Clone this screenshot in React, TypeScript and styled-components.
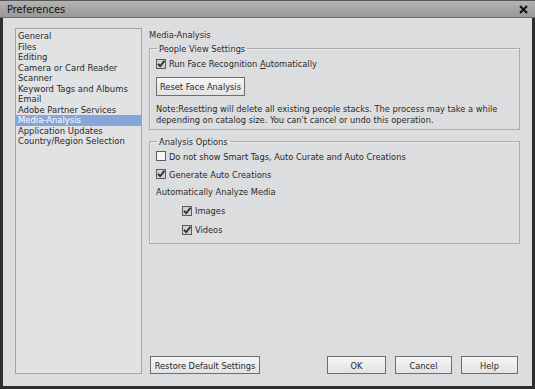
import React from 'react'
import styled, { createGlobalStyle } from 'styled-components'

const GlobalStyle = createGlobalStyle`
    html, body {
        margin: 0;
        padding: 0;
        background: #2b2b2b;
    }
`

const FONT = `'DejaVu Sans Condensed', 'DejaVu Sans', sans-serif`

const categories = [
    'General',
    'Files',
    'Editing',
    'Camera or Card Reader',
    'Scanner',
    'Keyword Tags and Albums',
    'Email',
    'Adobe Partner Services',
    'Media-Analysis',
    'Application Updates',
    'Country/Region Selection',
]

export default function App() {
    return (
        <>
            <GlobalStyle />
            <Window>
                <TitleBar>
                    <Title>Preferences</Title>
                    <Close>
                        <svg width="9" height="9" viewBox="0 0 9 9">
                            <path d="M1 1 L8 8 M8 1 L1 8" stroke="#111" strokeWidth="2" />
                        </svg>
                    </Close>
                </TitleBar>
                <Body>
                    <CategoryList>
                        {categories.map((name) => (
                            <CategoryItem key={name} $selected={name === 'Media-Analysis'}>
                                {name}
                            </CategoryItem>
                        ))}
                    </CategoryList>
                    <Panel>
                        <PanelTitle>Media-Analysis</PanelTitle>
                        <Group $top={3}>
                            <Legend>People View Settings</Legend>
                            <CheckRow $height={19}>
                                <CheckBox checked />
                                <span>
                                    Run Face Recognition <u>A</u>utomatically
                                </span>
                            </CheckRow>
                            <Button $width={89}>Reset Face Analysis</Button>
                            <Note>
                                Note:Resetting will delete all existing people stacks. The process may take a while
                                <br />
                                depending on catalog size. You can't cancel or undo this operation.
                            </Note>
                        </Group>
                        <Group $top={6}>
                            <Legend>Analysis Options</Legend>
                            <CheckRow>
                                <CheckBox />
                                <span>Do not show Smart Tags, Auto Curate and Auto Creations</span>
                            </CheckRow>
                            <CheckRow>
                                <CheckBox checked />
                                <span>Generate Auto Creations</span>
                            </CheckRow>
                            <Caption>Automatically Analyze Media</Caption>
                            <CheckRow $indent={26} $height={19}>
                                <CheckBox checked />
                                <span>Images</span>
                            </CheckRow>
                            <CheckRow $indent={26} $height={19}>
                                <CheckBox checked />
                                <span>Videos</span>
                            </CheckRow>
                        </Group>
                        <Footer>
                            <Button $width={110}>Restore Default Settings</Button>
                            <Spacer />
                            <Button $width={59}>OK</Button>
                            <Button $width={57}>Cancel</Button>
                            <Button $width={57}>Help</Button>
                        </Footer>
                    </Panel>
                </Body>
            </Window>
        </>
    )
}

function CheckBox({ checked }: { checked?: boolean }) {
    return (
        <Box $checked={checked}>
            {checked ? (
                <svg width="10" height="10" viewBox="0 0 10 10">
                    <path
                        d="M2 4.8 L4.2 7.2 L8.4 1.8"
                        fill="none"
                        stroke="#2a2a2a"
                        strokeWidth="1.8"
                    />
                </svg>
            ) : null}
        </Box>
    )
}

const Window = styled.div`
    width: 535px;
    height: 389px;
    box-sizing: border-box;
    display: flex;
    flex-direction: column;
    background: #dcdddf;
    border: 3px solid #2e2e2e;
    border-top: 0;
    font-family: ${FONT};
    font-size: 9.2px;
    color: #2a2a2a;
`

const TitleBar = styled.div`
    height: 18px;
    flex-shrink: 0;
    margin: 0 -3px;
    padding: 0 5px 0 7px;
    display: flex;
    align-items: center;
    background: linear-gradient(#b4b4b4, #a2a2a2 60%, #9a9a9a);
    border-top: 1px solid #555;
    border-bottom: 1px solid #6a6a6a;
    box-sizing: border-box;
`

const Title = styled.div`
    flex: 1;
    font-size: 11px;
    color: #111;
`

const Close = styled.div`
    display: flex;
    align-items: center;
    padding-right: 2px;
`

const Body = styled.div`
    flex: 1;
    display: flex;
    gap: 7px;
    padding: 10px 12px 12px 12px;
    min-height: 0;
`

const CategoryList = styled.div`
    width: 127px;
    box-sizing: border-box;
    border: 1px solid #a4a4a4;
    background: #e1e2e4;
    padding-top: 2px;
`

const CategoryItem = styled.div<{ $selected?: boolean }>`
    height: 10.5px;
    line-height: 10.5px;
    padding-left: 2px;
    white-space: nowrap;
    font-size: 9.4px;
    background: ${({ $selected }) => ($selected ? '#86a6da' : 'transparent')};
    color: ${({ $selected }) => ($selected ? '#fff' : '#2a2a2a')};
`

const Panel = styled.div`
    flex: 1;
    display: flex;
    flex-direction: column;
`

const PanelTitle = styled.div`
    line-height: 11px;
    margin-top: 1px;
`

const Group = styled.fieldset<{ $top: number }>`
    margin: ${({ $top }) => $top}px 0 0;
    padding: 0 6px 4px;
    border: 1px solid #acacac;
    box-shadow: inset 1px 1px 0 #ececec;
    display: flex;
    flex-direction: column;
    align-items: flex-start;
`

const Legend = styled.legend`
    margin-left: 1px;
    padding: 0 2px;
    line-height: 11px;
`

const CheckRow = styled.div<{ $indent?: number; $height?: number }>`
    height: ${({ $height }) => $height || 18}px;
    display: flex;
    align-items: center;
    gap: 3px;
    padding-left: ${({ $indent }) => $indent || 0}px;
    white-space: nowrap;

    u {
        text-underline-offset: 1px;
    }
`

const Box = styled.span<{ $checked?: boolean }>`
    width: 10px;
    height: 10px;
    box-sizing: border-box;
    border: 1px solid #5c5c5c;
    background: ${({ $checked }) => ($checked ? '#d0d0d0' : '#f6f6f6')};
    display: flex;
    align-items: center;
    justify-content: center;
    overflow: hidden;

    svg {
        flex-shrink: 0;
    }
`

const Button = styled.div<{ $width: number }>`
    width: ${({ $width }) => $width}px;
    height: 19px;
    box-sizing: border-box;
    border: 1px solid #6e6e6e;
    background: linear-gradient(#f6f6f6, #e2e2e2);
    display: flex;
    align-items: center;
    justify-content: center;
    white-space: nowrap;
    margin-top: 4px;
`

const Note = styled.div`
    margin-top: 7px;
    line-height: 11px;
    white-space: nowrap;
`

const Caption = styled.div`
    height: 18px;
    line-height: 18px;
`

const Footer = styled.div`
    margin-top: auto;
    display: flex;
    gap: 9px;
    padding: 0 2px 0 1px;

    ${Button} {
        height: 18px;
        margin-top: 0;
    }
`

const Spacer = styled.div`
    flex: 1;
`
